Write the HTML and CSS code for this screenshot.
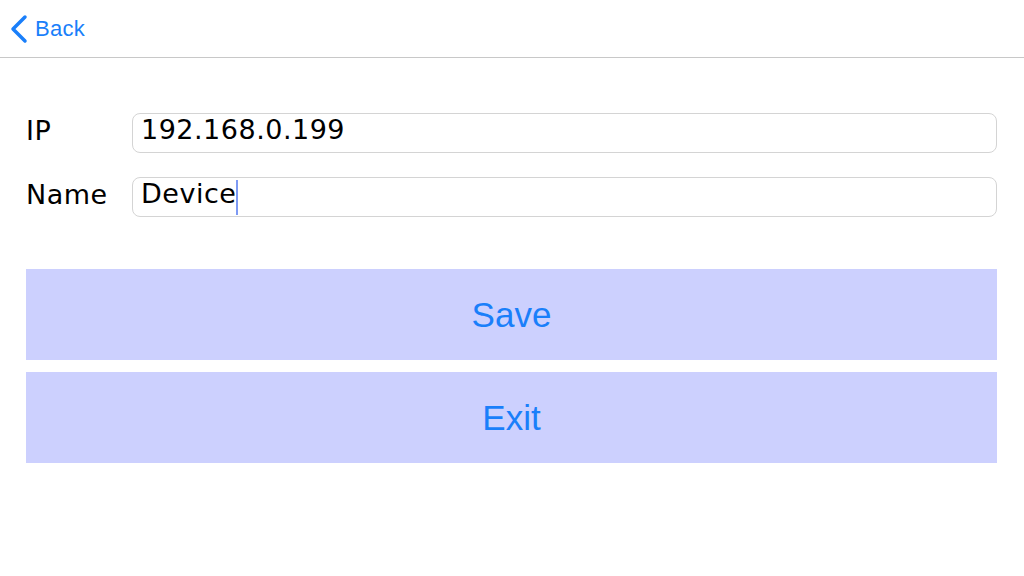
FILE: index.html
```html
<!DOCTYPE html>
<html lang="en">
<head>
    <meta charset="UTF-8">
    <meta name="viewport" content="width=device-width, initial-scale=1.0">
    <title>Device</title>
    <link rel="stylesheet" href="styles.css">
</head>
<body>

    <!-- Barra de navegación -->
    <header class="nav-bar">
        <a class="back-link" href="#">
            <svg class="back-icon" width="18" height="30" viewBox="0 0 18 30">
                <path d="M15 3 L3 15 L15 27" fill="none" stroke="currentColor" stroke-width="3.5" stroke-linecap="round" stroke-linejoin="round"/>
            </svg>
            <span>Back</span>
        </a>
    </header>

    <!-- Formulario del dispositivo -->
    <main class="device-form">
        <div class="field-row">
            <label class="field-label">IP</label>
            <div class="text-field">192.168.0.199</div>
        </div>
        <div class="field-row">
            <label class="field-label">Name</label>
            <div class="text-field">Device<span class="caret"></span></div>
        </div>

        <div class="actions">
            <button class="action-btn">Save</button>
            <button class="action-btn">Exit</button>
        </div>
    </main>

</body>
</html>
```

FILE: styles.css
```css
/* Reset */
* {
    margin: 0;
    padding: 0;
    box-sizing: border-box;
}

body {
    font-family: 'Liberation Sans', Arial, sans-serif;
    background-color: #fff;
    color: #000;
    width: 1024px;
    height: 576px;
    overflow: hidden;
}

/* Barra superior */
.nav-bar {
    height: 58px;
    border-bottom: 1px solid #c8c8c8;
    display: flex;
    align-items: center;
    padding-left: 10px;
}

.back-link {
    display: flex;
    align-items: center;
    gap: 7px;
    color: #1a7ffa;
    text-decoration: none;
    font-size: 22px;
    letter-spacing: 0.3px;
}

.back-icon {
    display: block;
}

/* Formulario */
.device-form {
    padding: 55px 27px 0 26px;
}

.field-row {
    display: flex;
    align-items: center;
    height: 40px;
    margin-bottom: 24px;
}

.field-label {
    width: 106px;
    font-family: 'DejaVu Sans', sans-serif;
    font-size: 27px;
    letter-spacing: 0.5px;
    padding-bottom: 6px;
}

.text-field {
    flex: 1;
    height: 40px;
    border: 1px solid #d4d4d4;
    border-radius: 8px;
    display: flex;
    align-items: center;
    padding: 0 8px 7px;
    font-family: 'DejaVu Sans', sans-serif;
    font-size: 27px;
    letter-spacing: 0.5px;
}

.caret {
    display: inline-block;
    width: 2px;
    height: 35px;
    margin-top: 7px;
    background-color: #7d9af4;
}

/* Botones */
.actions {
    display: flex;
    flex-direction: column;
    gap: 12px;
    margin-top: 52px;
}

.action-btn {
    height: 91px;
    border: none;
    background-color: #ccd0fe;
    color: #1a7ffa;
    font-family: 'Liberation Sans', Arial, sans-serif;
    font-size: 35px;
}
```
